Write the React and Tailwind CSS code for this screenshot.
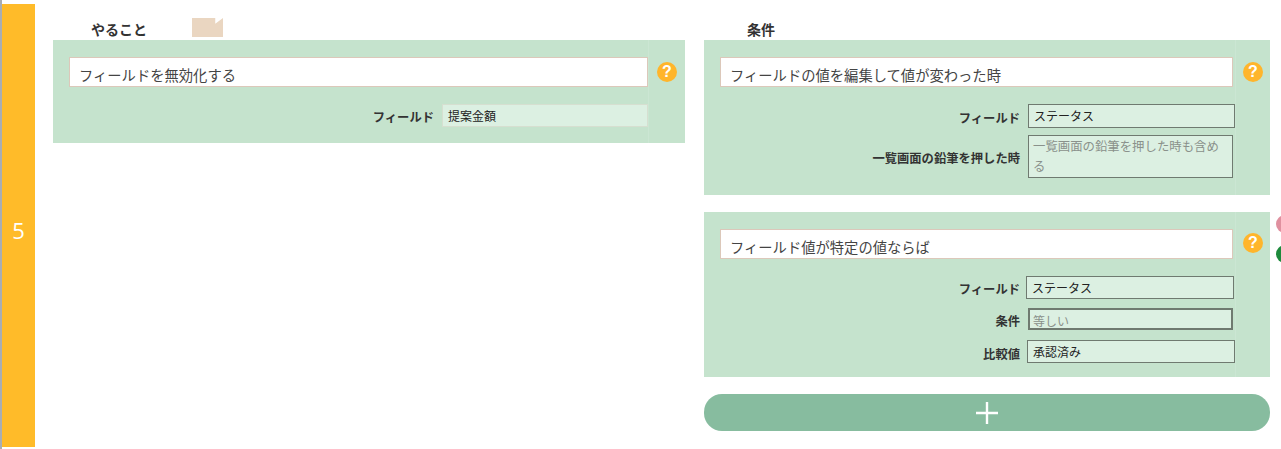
import React from "react";

const font = { fontFamily: '"Noto Sans CJK JP", "Noto Sans", sans-serif' };

function Help() {
  return (
    <div className="w-5 h-5 rounded-full bg-[#ffb52b] text-white flex items-center justify-center text-[16px] font-bold leading-none font-['Liberation_Sans',sans-serif]">
      ?
    </div>
  );
}

function Title({ text, className }) {
  return (
    <div className={`h-[30px] bg-white border border-[#dcc8ba] pl-[9px] pt-[7px] text-[14.3px] leading-[20px] text-[#444] whitespace-nowrap ${className}`}>
      {text}
    </div>
  );
}

function Row({ label, children, className, wrapClass }) {
  return (
    <div className={`flex items-center justify-end ${wrapClass}`}>
      <div className="text-[12.3px] font-bold text-[#333] whitespace-nowrap mt-[4px]">{label}</div>
      <div className={className}>{children}</div>
    </div>
  );
}

function Panel({ wrapClass, innerClass, children, helpClass }) {
  return (
    <div className={`flex bg-[#c5e3cd] ${wrapClass}`}>
      <div className={innerClass}>{children}</div>
      <div className={`flex-1 border-l border-[#cbe6d3] flex justify-center ${helpClass}`}>
        <Help />
      </div>
    </div>
  );
}

export default function App() {
  return (
    <div className="relative w-[1281px] h-[449px] bg-white overflow-hidden flex" style={font}>
      <div className="w-[2px] h-full bg-[#a9adb3] shrink-0" />
      <div className="w-[33px] mt-[4px] h-[443px] bg-[#ffbb29] text-white text-[22px] leading-[28px] flex items-center justify-center shrink-0 font-['Open_Sans',sans-serif]">
        <span className="mt-[8px]">5</span>
      </div>

      <div className="w-[632px] ml-[18px] shrink-0">
        <div className="h-[40px] flex items-end pl-[38px]">
          <div className="text-[14px] font-bold text-[#333] leading-[20px] mb-[1px]">やること</div>
          <div
            className="w-[31px] h-[19px] ml-[45px] mb-[3px] bg-[#ead6c1]"
            style={{ clipPath: "polygon(0 0, 75% 0, 75% 30%, 100% 0, 100% 100%, 0 100%)" }}
          />
        </div>
        <Panel wrapClass="h-[103px]" innerClass="w-[595px] pl-[16px] pt-[17px]" helpClass="pt-[22px]">
          <Title text="フィールドを無効化する" className="w-[579px]" />
          <Row
            label="フィールド"
            wrapClass="mt-[17px]"
            className="w-[206px] h-[23px] ml-[8px] pl-[5px] bg-[#dcf0e2] border border-[#d6dfd0] text-[12px] leading-[21px] text-[#222]"
          >
            提案金額
          </Row>
        </Panel>
      </div>

      <div className="w-[566px] ml-[19px] shrink-0">
        <div className="h-[40px] flex items-end pl-[43px]">
          <div className="text-[14px] font-bold text-[#333] leading-[20px] mb-[1px]">条件</div>
        </div>
        <Panel wrapClass="h-[155px]" innerClass="w-[531px] pl-[16px] pt-[17px]" helpClass="pt-[22px]">
          <Title text="フィールドの値を編集して値が変わった時" className="w-[513px]" />
          <Row
            label="フィールド"
            wrapClass="mt-[17px] w-[515px]"
            className="w-[207px] h-[24px] ml-[8px] pl-[5px] bg-[#dcf0e2] border border-[#6f7a70] text-[12px] leading-[22px] text-[#222]"
          >
            ステータス
          </Row>
          <Row
            label="一覧画面の鉛筆を押した時"
            wrapClass="mt-[7px] w-[513px]"
            className="w-[205px] h-[43px] ml-[8px] pl-[4px] pr-[2px] bg-[#dcf0e2] border border-[#6f7a70] text-[12.4px] leading-[20px] text-[#8a918b]"
          >
            一覧画面の鉛筆を押した時も含める
          </Row>
        </Panel>

        <Panel wrapClass="h-[165px] mt-[17px]" innerClass="w-[531px] pl-[16px] pt-[17px]" helpClass="pt-[21px]">
          <Title text="フィールド値が特定の値ならば" className="w-[513px]" />
          <Row
            label="フィールド"
            wrapClass="mt-[17px] w-[514px]"
            className="w-[208px] h-[23px] ml-[6px] pl-[5px] bg-[#dcf0e2] border border-[#6f7a70] text-[12px] leading-[21px] text-[#222]"
          >
            ステータス
          </Row>
          <Row
            label="条件"
            wrapClass="mt-[9px] w-[513px]"
            className="w-[205px] h-[22px] ml-[8px] pl-[3px] bg-[#dcf0e2] border-2 border-[#6f7a70] text-[12px] leading-[21px] text-[#8a918b]"
          >
            等しい
          </Row>
          <Row
            label="比較値"
            wrapClass="mt-[10px] w-[515px]"
            className="w-[208px] h-[23px] ml-[7px] pl-[5px] bg-[#dcf0e2] border border-[#6f7a70] text-[12px] leading-[21px] text-[#222]"
          >
            承認済み
          </Row>
        </Panel>

        <div className="h-[37px] mt-[17px] rounded-[18px] bg-[#87bc9f] flex items-center justify-center">
          <svg width="22" height="22" viewBox="0 0 22 22" className="mr-[1px]">
            <path d="M11 0V22M0 11H22" stroke="#fff" strokeWidth="2.4" fill="none" />
          </svg>
        </div>
      </div>

      <div className="absolute left-[1276px] top-[215px] w-[18px] h-[18px] rounded-full bg-[#e0909f]" />
      <div className="absolute left-[1276px] top-[245px] w-[18px] h-[18px] rounded-full bg-[#1d8a3c]" />
    </div>
  );
}
